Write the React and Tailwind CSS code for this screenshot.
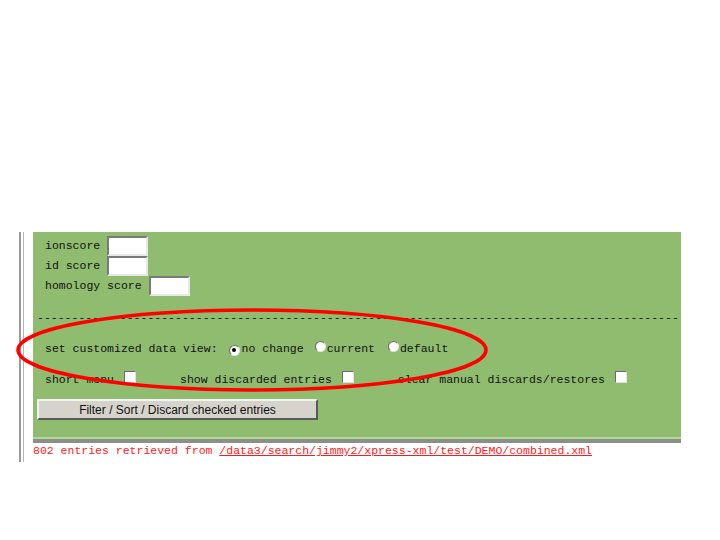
import React from 'react'

const mono = { fontFamily: '"Liberation Mono", "Courier New", monospace' }

function TextBox({ w = 'w-[41px]' }) {
  return (
    <span
      className={`inline-block ${w} h-[20px] bg-white border-2 border-t-[#7a7a7a] border-l-[#7a7a7a] border-b-[#e8e8e8] border-r-[#e8e8e8]`}
    />
  )
}

function Check() {
  return (
    <span className="inline-block w-[12px] h-[12px] bg-white border border-t-[#6b6b6b] border-l-[#6b6b6b] border-b-[#e0e0e0] border-r-[#e0e0e0]" />
  )
}

function Radio({ on }) {
  return (
    <span className="inline-flex items-center justify-center w-[11px] h-[11px] rounded-full bg-white border border-t-[#6b6b6b] border-l-[#6b6b6b] border-b-[#e6e6e6] border-r-[#e6e6e6]">
      {on && <span className="w-[4px] h-[4px] rounded-full bg-black" />}
    </span>
  )
}

export default function App() {
  return (
    <div className="relative w-[720px] h-[540px] bg-white overflow-hidden text-[#111]">
      <div className="flex pt-[232px] pl-[19px]">
        {/* left frame lines */}
        <div className="w-[2px] h-[230px] bg-[#9a9a9a]" />
        <div className="w-px h-[230px] ml-[2px] bg-[#b5b5b5]" />

        <div className="ml-[9px] w-[648px]">
          {/* green form panel */}
          <div className="bg-[#90bc70] h-[211px] pl-[4px] pt-[3px] flex flex-col border-b-[4px] border-b-[#8a8f88] shadow-[inset_0_-2px_0_#b4d69c]" style={mono}>
            <div className="flex items-center gap-[7px] pl-[8px] h-[21px] text-[11.5px]">
              <span>ionscore</span>
              <TextBox />
            </div>
            <div className="flex items-center gap-[7px] pl-[8px] h-[20px] text-[11.5px]">
              <span>id score</span>
              <TextBox />
            </div>
            <div className="flex items-center gap-[7px] pl-[8px] h-[20px] text-[11.5px]">
              <span>homology score</span>
              <TextBox />
            </div>

            <div className="mt-[15px] h-[14px] leading-[14px] whitespace-nowrap text-[11.5px]">
              {'-'.repeat(93)}
            </div>

            <div className="flex items-center pl-[8px] mt-[16px] h-[16px] text-[11.5px]">
              <span>set customized data view:</span>
              <span className="ml-[11px]"><Radio on /></span>
              <span className="ml-[2px]">no change</span>
              <span className="ml-[11px]"><Radio /></span>
              <span className="ml-[1px]">current</span>
              <span className="ml-[13px]"><Radio /></span>
              <span className="ml-[1px]">default</span>
            </div>

            <div className="flex items-center pl-[8px] mt-[15px] h-[16px] text-[11.5px]">
              <span>short menu</span>
              <span className="ml-[10px]"><Check /></span>
              <span className="ml-[44px]">show discarded entries</span>
              <span className="ml-[10px]"><Check /></span>
              <span className="ml-[44px]">clear manual discards/restores</span>
              <span className="ml-[10px]"><Check /></span>
            </div>

            <div className="mt-[10px]">
              <button
                className="w-[281px] h-[21px] bg-[#d6d3cd] border-2 border-t-[#f4f4f4] border-l-[#f4f4f4] border-b-[#5a5a5a] border-r-[#5a5a5a] text-[12px] text-[#111]"
                style={{ fontFamily: '"Liberation Sans", Arial, sans-serif' }}
              >
                Filter / Sort / Discard checked entries
              </button>
            </div>
          </div>

          {/* status line */}
          <div className="-mt-[1px] text-[11.5px] text-[#ff1a1a] whitespace-nowrap" style={mono}>
            802 entries retrieved from{' '}
            <span className="underline">/data3/search/jimmy2/xpress-xml/test/DEMO/combined.xml</span>
          </div>
        </div>
      </div>

      {/* red annotation ellipse */}
      <svg className="absolute left-[14px] top-[306px]" width="478" height="90" viewBox="0 0 478 90">
        <ellipse cx="238" cy="44" rx="234" ry="40" fill="none" stroke="#ff0000" strokeWidth="3.5" />
      </svg>
    </div>
  )
}
